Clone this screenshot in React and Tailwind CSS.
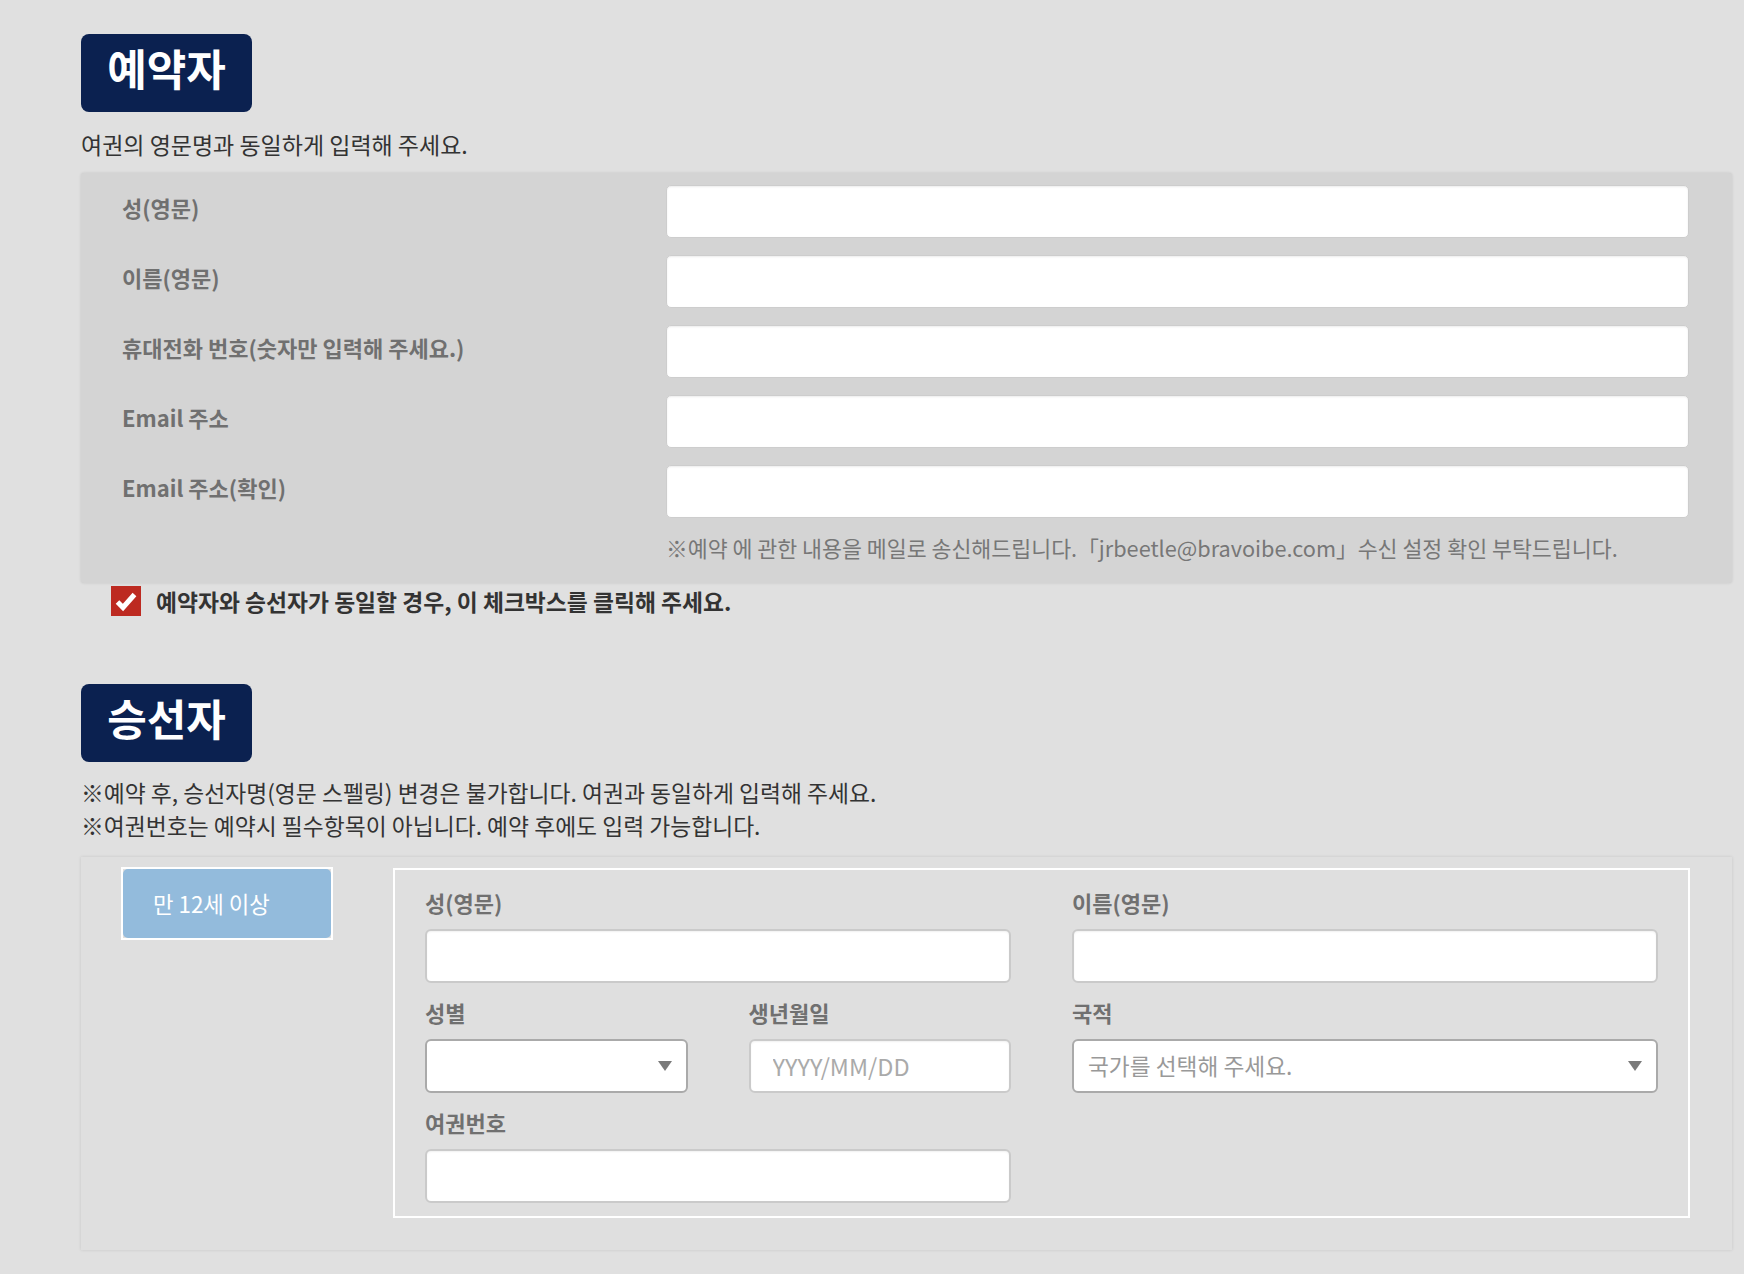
import { useState } from "react"

const bookerFields = [
  "성(영문)",
  "이름(영문)",
  "휴대전화 번호(숫자만 입력해 주세요.)",
  "Email 주소",
  "Email 주소(확인)",
]

function Arrow() {
  return (
    <svg width="14" height="10" viewBox="0 0 14 10">
      <path d="M0 0 L14 0 L7 10 Z" fill="#7a7a7a" />
    </svg>
  )
}

function Field({ label, children, className = "" }) {
  return (
    <div className={className}>
      <div className="mb-[12px] text-[22px] leading-[30px] font-bold text-[#707070]">{label}</div>
      {children}
    </div>
  )
}

export default function App() {
  const [same, setSame] = useState(true)

  return (
    <div className="min-h-screen bg-[#e0e0e0] pt-[34px] pl-[81px] pr-[12px] pb-[24px] font-['Noto_Sans_CJK_KR','Noto_Sans',sans-serif]">
      {/* 예약자 */}
      <div className="inline-flex h-[78px] w-[171px] items-center justify-center rounded-[8px] bg-[#0b2150] pb-[12px] text-[43px] font-bold leading-none text-white">
        예약자
      </div>
      <p className="mt-[17px] text-[23px] leading-[30px] text-[#333]">여권의 영문명과 동일하게 입력해 주세요.</p>

      <div className="mt-[14px] rounded-[3px] bg-[#d4d4d4] pt-[12px] pb-[20px] pl-[41px] pr-[43px] shadow-[0_0_3px_rgba(0,0,0,0.12)]">
        <div className="flex flex-col gap-[17px]">
          {bookerFields.map((label) => (
            <div key={label} className="flex">
              <div className="w-[544px] pt-[7px] text-[22px] leading-[30px] font-bold text-[#707070]">{label}</div>
              <input className="h-[53px] flex-1 rounded-[5px] border border-[#cdcdcd] bg-white shadow-[inset_0_1px_2px_rgba(0,0,0,0.08)] outline-none" />
            </div>
          ))}
        </div>
        <p className="mt-[15px] ml-[544px] text-[21.7px] leading-[30px] text-[#777]">
          ※예약 에 관한 내용을 메일로 송신해드립니다.「jrbeetle@bravoibe.com」수신 설정 확인 부탁드립니다.
        </p>
      </div>

      {/* Same person checkbox */}
      <label className="mt-[3px] ml-[30px] flex cursor-pointer items-start gap-[15px]">
        <span
          onClick={() => setSame(!same)}
          className="flex h-[30px] w-[30px] items-center justify-center bg-[#bd2a21]"
        >
          {same && (
            <svg width="24" height="24" viewBox="0 0 24 24">
              <path d="M3.5 13 L9 18.5 L20.5 5.5" fill="none" stroke="white" strokeWidth="5" />
            </svg>
          )}
        </span>
        <span className="mt-[1px] text-[22.8px] leading-[30px] font-bold text-[#333]">
          예약자와 승선자가 동일할 경우, 이 체크박스를 클릭해 주세요.
        </span>
      </label>

      {/* 승선자 */}
      <div className="mt-[67px] inline-flex h-[78px] w-[171px] items-center justify-center rounded-[8px] bg-[#0b2150] pb-[12px] text-[43px] font-bold leading-none text-white">
        승선자
      </div>
      <div className="mt-[14px] text-[22.8px] leading-[33px] text-[#333]">
        <p>※예약 후, 승선자명(영문 스펠링) 변경은 불가합니다. 여권과 동일하게 입력해 주세요.</p>
        <p>※여권번호는 예약시 필수항목이 아닙니다. 예약 후에도 입력 가능합니다.</p>
      </div>

      <div className="mt-[15px] flex items-start gap-[60px] bg-[#dfdfdf] pt-[10px] pb-[32px] pl-[40px] pr-[42px] shadow-[0_0_3px_rgba(0,0,0,0.12)]">
        <div className="h-[73px] w-[212px] border-2 border-white">
          <div className="flex h-full items-center rounded-[5px] bg-[#93bbdc] pl-[30px] text-[22.3px] text-white">
            만 12세 이상
          </div>
        </div>

        <div className="mt-[1px] flex-1 border-2 border-white px-[30px] pt-[17px] pb-[13px]">
          <div className="grid grid-cols-4 gap-x-[61px] gap-y-[14px]">
            <Field label="성(영문)" className="col-span-2">
              <input className="h-[54px] w-full rounded-[6px] border-2 border-[#cacaca] bg-white shadow-[inset_0_1px_2px_rgba(0,0,0,0.06)] outline-none" />
            </Field>
            <Field label="이름(영문)" className="col-span-2">
              <input className="h-[54px] w-full rounded-[6px] border-2 border-[#cacaca] bg-white shadow-[inset_0_1px_2px_rgba(0,0,0,0.06)] outline-none" />
            </Field>
            <Field label="성별">
              <div className="flex h-[54px] w-full items-center justify-end rounded-[6px] border-2 border-[#aaaaaa] bg-white pr-[14px]">
                <Arrow />
              </div>
            </Field>
            <Field label="생년월일">
              <input
                placeholder="YYYY/MM/DD"
                className="h-[54px] w-full rounded-[6px] border-2 border-[#cacaca] bg-white pl-[22px] text-[23.5px] text-[#333] placeholder:text-[#aaa] shadow-[inset_0_1px_2px_rgba(0,0,0,0.06)] outline-none"
              />
            </Field>
            <Field label="국적" className="col-span-2">
              <div className="flex h-[54px] w-full items-center justify-between rounded-[6px] border-2 border-[#aaaaaa] bg-white pl-[14px] pr-[14px]">
                <span className="text-[22.7px] text-[#999]">국가를 선택해 주세요.</span>
                <Arrow />
              </div>
            </Field>
            <Field label="여권번호" className="col-span-2">
              <input className="h-[54px] w-full rounded-[6px] border-2 border-[#cacaca] bg-white shadow-[inset_0_1px_2px_rgba(0,0,0,0.06)] outline-none" />
            </Field>
          </div>
        </div>
      </div>
    </div>
  )
}
